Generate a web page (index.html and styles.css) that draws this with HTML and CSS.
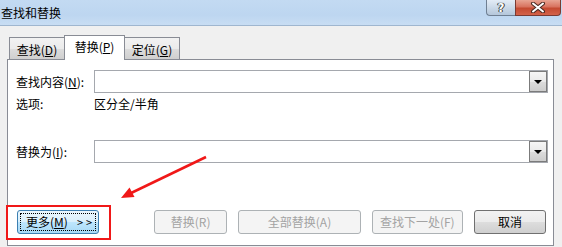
FILE: index.html
```html
<html>

<head>
  <meta charset="utf-8">
  <link rel="stylesheet" href="styles.css">
</head>

<body>
  <div class="window">
    <div class="titlebar">
      <div class="title">查找和替换</div>
      <div class="caption-buttons">
        <div class="caption-btn help">?</div>
        <div class="caption-btn close">
          <svg width="16" height="11" viewBox="0 0 16 11">
            <path d="M3 1.5 L13 9.5 M13 1.5 L3 9.5" stroke="#4a2a22" stroke-width="4" stroke-linecap="round"/>
            <path d="M3 1.5 L13 9.5 M13 1.5 L3 9.5" stroke="#ffffff" stroke-width="2" stroke-linecap="round"/>
          </svg>
        </div>
      </div>
    </div>

    <div class="content">
      <div class="tabs">
        <div class="tab">查找(<u>D</u>)</div>
        <div class="tab active">替换(<u>P</u>)</div>
        <div class="tab">定位(<u>G</u>)</div>
      </div>

      <div class="panel">
        <div class="field-row find-row">
          <div class="label">查找内容(<u>N</u>):</div>
          <div class="combo">
            <div class="combo-btn"><span class="caret"></span></div>
          </div>
        </div>
        <div class="field-row options-row">
          <div class="label">选项:</div>
          <div class="value">区分全/半角</div>
        </div>
        <div class="field-row replace-row">
          <div class="label">替换为(<u>I</u>):</div>
          <div class="combo">
            <div class="combo-btn"><span class="caret"></span></div>
          </div>
        </div>

        <div class="button-row">
          <div class="btn btn-more"><span class="focus">更多(<u>M</u>)<span class="chevrons">&gt;&gt;</span></span></div>
          <div class="btn disabled btn-replace">替换(R)</div>
          <div class="btn disabled btn-replace-all">全部替换(A)</div>
          <div class="btn disabled btn-find-next">查找下一处(F)</div>
          <div class="btn btn-cancel">取消</div>
        </div>
      </div>
    </div>

    <!-- annotation drawn over the dialog -->
    <div class="mark-box"></div>
    <svg class="mark-arrow" width="562" height="247" viewBox="0 0 562 247">
      <line x1="206" y1="157" x2="128" y2="194.5" stroke="#f01818" stroke-width="2.5"/>
      <polygon points="121,198 134.5,197 129.5,187.5" fill="#f01818"/>
    </svg>
  </div>
</body>

</html>
```

FILE: styles.css
```css
html,
body {
  margin: 0;
  padding: 0;
  background: #f0f0f0;
}

body {
  font-family: "Noto Sans CJK SC", "Noto Sans", sans-serif;
  font-size: 12px;
  color: #000;
}

.window {
  position: relative;
  width: 562px;
  height: 247px;
  overflow: hidden;
  background: #f0f0f0;
}

/* Title bar */
.titlebar {
  display: flex;
  height: 25px;
  border-bottom: 1px solid #9fb6cf;
  background: linear-gradient(to bottom, #c3daf2 0%, #bdd6f0 60%, #c8ddf3 100%);
}

.title {
  padding: 5px 0 0 1px;
  line-height: 16px;
}

.caption-buttons {
  display: flex;
  margin-left: auto;
  margin-right: 1px;
  align-self: flex-start;
}

.caption-btn {
  display: flex;
  align-items: center;
  justify-content: center;
  height: 16px;
  box-sizing: border-box;
  border: 1px solid #6f7f92;
  border-top: none;
}

.caption-btn.help {
  width: 29px;
  border-right: none;
  border-radius: 0 0 0 4px;
  background: linear-gradient(to bottom, #e3ecf6 0%, #cbd9e8 50%, #b4c6da 100%);
  color: #fff;
  font-family: "DejaVu Sans", sans-serif;
  font-weight: bold;
  font-size: 12px;
  line-height: 14px;
  text-shadow: 0 0 1px #333, 0 0 1px #333, 1px 0 0 #444, -1px 0 0 #444;
}

.caption-btn.close {
  width: 46px;
  border-color: #7a3a32;
  border-radius: 0 0 4px 0;
  background: linear-gradient(to bottom, #e8a493 0%, #d8735f 45%, #c44a31 55%, #d3624a 100%);
}

/* Tabs */
.content {
  padding: 9px 8px 0 7px;
}

.tabs {
  display: flex;
  align-items: flex-end;
  height: 24px;
  padding-left: 2px;
}

.tab {
  box-sizing: border-box;
  height: 22px;
  width: 56px;
  margin-left: -1px;
  padding-top: 4px;
  border: 1px solid #898c95;
  border-bottom: none;
  background: linear-gradient(to bottom, #f2f2f2 0%, #ebebeb 50%, #dddddd 51%, #cfcfcf 100%);
  text-align: center;
  line-height: 16px;
}

.tab:first-child {
  margin-left: 0;
}

.tab.active {
  position: relative;
  z-index: 1;
  height: 25px;
  width: 61px;
  margin-bottom: -1px;
  padding-top: 3px;
  background: #fff;
}

/* Panel */
.panel {
  box-sizing: border-box;
  height: 187px;
  border: 1px solid #898c95;
  background: #fff;
  display: flex;
  flex-direction: column;
}

.field-row {
  display: flex;
  align-items: center;
  padding: 0 5px 0 8px;
}

.label {
  width: 78px;
  flex-shrink: 0;
  line-height: 16px;
}

.value {
  line-height: 16px;
}

.find-row {
  margin-top: 10px;
}

.options-row {
  margin-top: 3px;
  height: 16px;
}

.replace-row {
  margin-top: 28px;
}

.combo {
  flex: 1;
  box-sizing: border-box;
  height: 23px;
  border: 1px solid #a5a8ae;
  display: flex;
  justify-content: flex-end;
  align-items: center;
}

.combo-btn {
  box-sizing: border-box;
  width: 18px;
  height: 21px;
  border: 1px solid #7b7b7b;
  background: linear-gradient(to bottom, #f6f6f6 0%, #e9e9e9 50%, #dcdcdc 51%, #cdcdcd 100%);
  display: flex;
  align-items: center;
  justify-content: center;
}

.caret {
  width: 0;
  height: 0;
  border-left: 4px solid transparent;
  border-right: 4px solid transparent;
  border-top: 4px solid #000;
}

/* Buttons */
.button-row {
  display: flex;
  margin-top: 47px;
  padding: 0 7px 0 9px;
  gap: 11px;
}

.btn {
  box-sizing: border-box;
  height: 24px;
  border: 1px solid #707070;
  border-radius: 3px;
  display: flex;
  align-items: center;
  justify-content: center;
  line-height: 16px;
  white-space: nowrap;
  background: linear-gradient(to bottom, #f2f2f2 0%, #ebebeb 50%, #dddddd 51%, #cfcfcf 100%);
}

.btn.disabled {
  border-color: #adb2b5;
  background: #f4f4f4;
  color: #a3a3a3;
}

.btn-more {
  width: 82px;
  border-color: #3c7fb1;
  background: linear-gradient(to bottom, #eaf6fd 0%, #d9f0fc 50%, #bee6fd 51%, #a7d9f5 100%);
  padding: 2px;
}

.btn-more .focus {
  display: block;
  box-sizing: border-box;
  width: 100%;
  height: 18px;
  border: 1px dotted #000;
  padding-left: 5px;
  line-height: 16px;
  white-space: nowrap;
}

.chevrons {
  margin-left: 9px;
  letter-spacing: 3px;
  font-size: 11px;
}

.btn-replace {
  width: 74px;
  margin-left: 44px;
}

.btn-replace-all {
  width: 124px;
}

.btn-find-next {
  width: 92px;
}

.btn-cancel {
  width: 73px;
}

/* Red annotation */
.mark-box {
  position: absolute;
  left: 6px;
  top: 205px;
  width: 101px;
  height: 31px;
  border: 2px solid #f01818;
}

.mark-arrow {
  position: absolute;
  left: 0;
  top: 0;
}
```
